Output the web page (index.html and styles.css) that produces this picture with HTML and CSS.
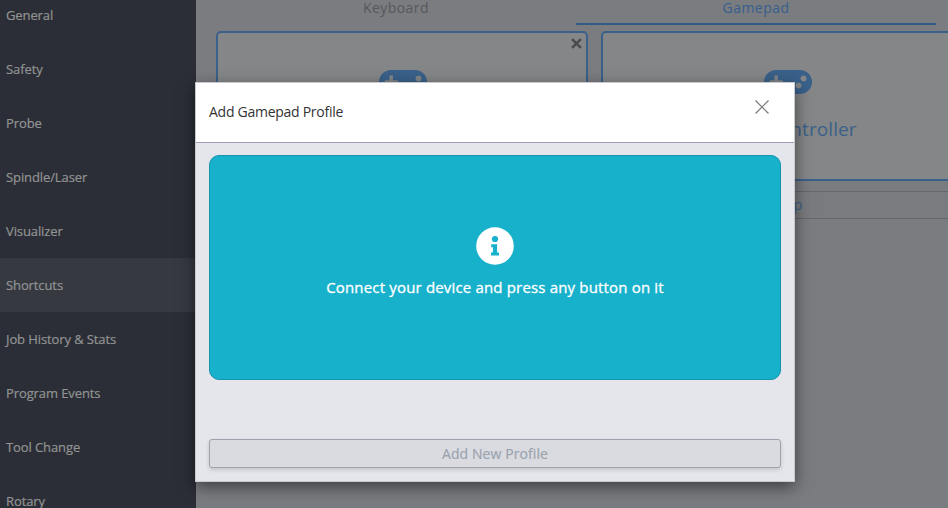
FILE: index.html
```
<!DOCTYPE html>
<html lang="en">
<head>
<meta charset="utf-8">
<title>Shortcuts</title>
<link rel="stylesheet" href="styles.css">
</head>
<body>
<div class="app">
  <nav class="sidebar">
    <a class="item">General</a>
    <a class="item">Safety</a>
    <a class="item">Probe</a>
    <a class="item">Spindle/Laser</a>
    <a class="item">Visualizer</a>
    <a class="item active">Shortcuts</a>
    <a class="item">Job History &amp; Stats</a>
    <a class="item">Program Events</a>
    <a class="item">Tool Change</a>
    <a class="item">Rotary</a>
  </nav>
  <main class="content">
    <div class="tabs">
      <div class="tab">Keyboard</div>
      <div class="tab selected">Gamepad</div>
    </div>
    <div class="cards">
      <section class="card">
        <svg class="remove" viewBox="0 0 10 10"><path d="M1 1l8 8M9 1l-8 8"/></svg>
        <svg class="pad" viewBox="0 0 48 24"><path fill-rule="evenodd" d="M12 0h24a12 12 0 0 1 0 24H12A12 12 0 0 1 12 0zM10.500 5.500v4.800h-4.800v3.400h4.800v4.800h3.400v-4.800h4.800v-3.400h-4.800V5.500zM39.500 5.500a3 3 0 1 0 .01 0zM34.500 12.500a3 3 0 1 0 .01 0z"/></svg>
      </section>
      <section class="card">
        <svg class="pad" viewBox="0 0 48 24"><path fill-rule="evenodd" d="M12 0h24a12 12 0 0 1 0 24H12A12 12 0 0 1 12 0zM10.500 5.500v4.800h-4.800v3.400h4.800v4.800h3.400v-4.800h4.800v-3.400h-4.800V5.500zM39.500 5.500a3 3 0 1 0 .01 0zM34.500 12.500a3 3 0 1 0 .01 0z"/></svg>
        <div class="name">Xbox Controller</div>
      </section>
      <button class="map">Map</button>
    </div>
  </main>
</div>
<div class="modal">
  <header class="modal-head">
    <span class="title">Add Gamepad Profile</span>
    <svg class="close" viewBox="0 0 14 14"><path d="M.5.5l13 13M13.500.5l-13 13"/></svg>
  </header>
  <div class="modal-body">
    <div class="notice">
      <svg class="info" viewBox="0 0 38 38"><circle cx="19" cy="19" r="18.800" fill="#fff"/><circle cx="19" cy="12" r="3.100"/><path d="M15.200 17.200h5.900v8.200h1.900v3.100h-8v-3.100h1.900v-5.200h-1.700z"/></svg>
      <p class="message">Connect your device and press any button on it</p>
    </div>
    <button class="add">Add New Profile</button>
  </div>
</div>
</body>
</html>
```
FILE: styles.css
```
* { box-sizing: border-box; }
body {
  margin: 0;
  height: 508px;
  overflow: hidden;
  font-family: "Open Sans", sans-serif;
  background: #7b7c80;
}
button { font-family: inherit; }
.app { display: flex; height: 508px; overflow: hidden; }
.sidebar { flex: none; width: 196px; margin-top: -12px; background: #2b2e36; height: 540px; }
.item {
  display: flex;
  align-items: center;
  height: 54px;
  padding-left: 6px;
  font-size: 13px;
  letter-spacing: -0.1px;
  color: #929393;
  -webkit-text-stroke: 0.2px #929393;
}
.item.active { background: #373941; }
.content { flex: none; width: 800px; padding-left: 20px; }
.tabs { display: flex; height: 25px; }
.tab {
  width: 360px;
  text-align: center;
  font-size: 14px;
  line-height: 15px;
  letter-spacing: 0.45px;
  color: #56585d;
}
.selected { color: #345f8e; border-bottom: 2px solid #305b88; }
.cards { display: grid; grid-template-columns: 372px 372px; column-gap: 13px; row-gap: 10px; padding-top: 6px; }
.card {
  position: relative;
  display: flex;
  flex-direction: column;
  align-items: center;
  height: 150px;
  padding-top: 37px;
  border: 2px solid #3a618a;
  border-radius: 5px;
  background: #858687;
}
.remove { position: absolute; top: 5px; right: 4px; width: 11px; height: 11px; fill: none; stroke: #484a4d; stroke-width: 2.2; }
.pad { flex: none; width: 48px; height: 24px; margin-left: 1px; fill: #3a618a; }
.name { margin-top: 20px; font-size: 19px; letter-spacing: 0.1px; line-height: 30px; color: #3a618a; white-space: nowrap; }
.map {
  grid-column: 2;
  height: 28px;
  padding: 0 0 2px;
  border: 1px solid #65676c;
  border-radius: 3px;
  background: #7a7b7e;
  color: #3a618a;
  font-size: 15px;
}
.modal {
  position: absolute;
  left: 195px;
  top: 82px;
  width: 600px;
  height: 400px;
  display: flex;
  flex-direction: column;
  border: 1px solid #c9cacc;
  background: #e5e6eb;
  box-shadow: 0 5px 15px rgba(0, 0, 0, 0.5);
}
.modal-head {
  display: flex;
  justify-content: space-between;
  height: 60px;
  padding: 17px 25px 0 13px;
  border-bottom: 1px solid #9b9eb4;
  background: #fff;
}
.title { font-size: 14px; line-height: 24px; letter-spacing: -0.27px; color: #333; }
.close { width: 14px; height: 14px; fill: none; stroke: #777; stroke-width: 1.2; }
.modal-body { flex: 1; display: flex; flex-direction: column; justify-content: space-between; padding: 12px 13px 13px; }
.notice {
  display: flex;
  flex-direction: column;
  align-items: center;
  height: 225px;
  padding-top: 71px;
  border: 1px solid #1594aa;
  border-radius: 10px;
  background: #18b1cc;
}
.info { width: 38px; height: 38px; fill: #18b1cc; }
.message {
  margin: 10px 0 0;
  font-size: 15px;
  line-height: 24px;
  letter-spacing: 0.17px;
  color: #fff;
  -webkit-text-stroke: 0.3px #fff;
  white-space: nowrap;
}
.add {
  height: 29px;
  padding: 0;
  border: 1px solid #9ca3af;
  border-radius: 3px;
  background: #d9dbe0;
  box-shadow: 0 2px 4px rgba(0, 0, 0, 0.15);
  font-size: 14px;
  letter-spacing: 0.08px;
  color: #9ca3af;
  -webkit-text-stroke: 0.2px #9ca3af;
}
```
